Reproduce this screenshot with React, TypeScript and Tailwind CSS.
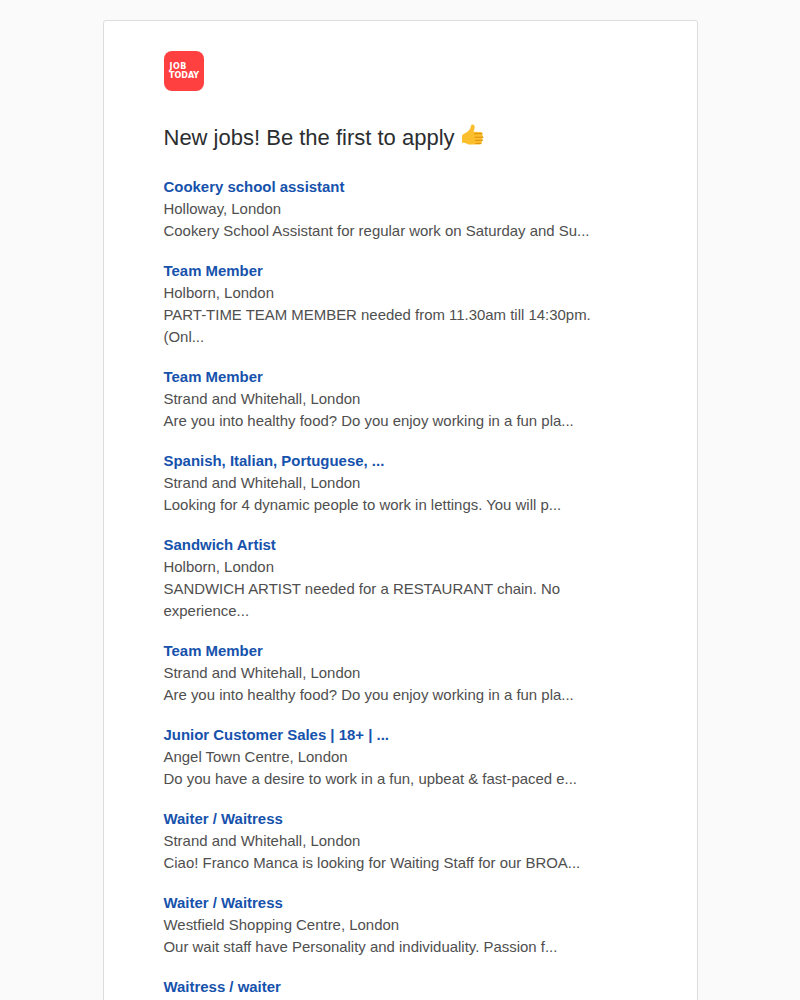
const jobs = [
  { title: "Cookery school assistant", place: "Holloway, London", text: "Cookery School Assistant for regular work on Saturday and Su..." },
  { title: "Team Member", place: "Holborn, London", text: "PART-TIME TEAM MEMBER needed from 11.30am till 14:30pm. (Onl..." },
  { title: "Team Member", place: "Strand and Whitehall, London", text: "Are you into healthy food? Do you enjoy working in a fun pla..." },
  { title: "Spanish, Italian, Portuguese, ...", place: "Strand and Whitehall, London", text: "Looking for 4 dynamic people to work in lettings. You will p..." },
  { title: "Sandwich Artist", place: "Holborn, London", text: "SANDWICH ARTIST needed for a RESTAURANT chain. No experience..." },
  { title: "Team Member", place: "Strand and Whitehall, London", text: "Are you into healthy food? Do you enjoy working in a fun pla..." },
  { title: "Junior Customer Sales | 18+ | ...", place: "Angel Town Centre, London", text: "Do you have a desire to work in a fun, upbeat & fast-paced e..." },
  { title: "Waiter / Waitress", place: "Strand and Whitehall, London", text: "Ciao! Franco Manca is looking for Waiting Staff for our BROA..." },
  { title: "Waiter / Waitress", place: "Westfield Shopping Centre, London", text: "Our wait staff have Personality and individuality. Passion f..." },
  { title: "Waitress / waiter" },
];

function ThumbsUp() {
  return (
    <svg width="24" height="24" viewBox="0 0 24 24" className="shrink-0">
      <path d="M1 12.500c0-1.500 1-2.300 2.500-3 2-.9 4-2.300 5.300-4.200.8-1.300 1-2.700 1.200-3.500.2-1 1-1.500 1.900-1.300 1.300.3 1.900 1.500 1.800 3-.1 1.500-.8 3-1.200 4.300l7 .1c1.300 0 2.200.9 2.200 2 0 .6-.2 1-.5 1.400.5.400.8.900.8 1.500 0 .700-.4 1.300-.9 1.600.3.300.5.800.5 1.300 0 .800-.5 1.400-1.100 1.700.2.300.3.600.3 1 0 1.200-1 2-2.200 2H8.500c-1.300 0-2.200-.5-3.200-1-1-.4-1.800-.6-2.500-.9C1.700 19.900 1 18.700 1 17.300z" fill="#fbbf2d" />
      <path d="M13.500 9.700h7M14 13.200h8M14.500 16.400h7M14.800 19.400h5" stroke="#e08e0b" strokeWidth="1" strokeLinecap="round" fill="none" />
    </svg>
  );
}

export default function App() {
  return (
    <div className="h-[1000px] overflow-hidden bg-[#fafafa] pt-5 font-['Liberation_Sans',Arial,sans-serif]">
      <div className="ml-[103px] w-[595px] rounded-t-[3px] border border-[#dddddd] bg-white pt-[30px] pr-[74px] pb-10 pl-[59.500px]">
        <div className="ml-[0.500px] flex h-10 w-10 flex-col items-center justify-center rounded-lg bg-[#ff4040] font-['DejaVu_Sans',sans-serif] text-[8px] leading-[9px] font-bold text-white">
          <span className="w-[31px] pl-[1px] tracking-[0.5px]">JOB</span>
          <span className="w-[31px] pl-[0.5px]">TODAY</span>
        </div>
        <h1 className="mt-[31px] flex h-8 items-center gap-[6px] text-[22px] leading-8 font-normal text-[#2b2e30]">
          New jobs! Be the first to apply
          <span className="-mt-[4px]"><ThumbsUp /></span>
        </h1>
        <div className="mt-[22px] flex flex-col gap-[18px]">
          {jobs.map((job, i) => (
            <div key={i} className="text-[14.950px] leading-[22px] text-[#4f4f4f]">
              <div className="font-bold text-[#1652ac]">{job.title}</div>
              {job.place && <div>{job.place}</div>}
              {job.text && <div>{job.text}</div>}
            </div>
          ))}
        </div>
      </div>
    </div>
  );
}
